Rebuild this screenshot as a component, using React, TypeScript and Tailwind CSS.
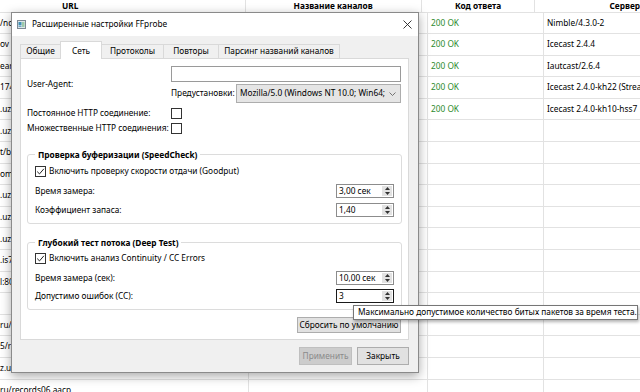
import React from 'react';

const urlTails = [
  '/nc', 'ov', 'ear', '174', '.uz', '.uz', 't/b', 'om', '.uz', '.uz', '.uz', '.is7', 'l:80', '',
  'ru/', '5/r', 'z.uz/1100-sep', 'ru/records06.aacp',
];

const servers = [
  'Nimble/4.3.0-2',
  'Icecast 2.4.4',
  'Iautcast/2.6.4',
  'Icecast 2.4.0-kh22 (Streaming Media)',
  'Icecast 2.4.0-kh10-hss7',
];

const CheckBox = ({ checked }: { checked?: boolean }) => (
  <span className="w-[11px] h-[11px] border border-[#333333] bg-white flex items-center justify-center shrink-0">
    {checked && (
      <svg width="9" height="9" viewBox="0 0 9 9">
        <path d="M1.2 4.6 L3.5 6.9 L7.9 1.8" fill="none" stroke="#222" strokeWidth="1" />
      </svg>
    )}
  </span>
);

const SpinBox = ({ value, focused }: { value: string; focused?: boolean }) => (
  <div
    className={
      focused
        ? 'w-[58px] h-[14px] border border-[#1a1a1a] bg-white flex'
        : 'w-[58px] h-[14px] border border-[#8c8c8c] bg-white flex'
    }
  >
    <span className="flex-1 pl-[2px] leading-[12px] whitespace-nowrap">{value}</span>
    <span className="w-[10px] my-[1px] mr-[1px] bg-[#e2e2e2] flex flex-col items-center justify-center gap-[2px]">
      <svg width="5" height="3" viewBox="0 0 5 3">
        <path d="M0 3 L2.5 0 L5 3Z" fill="#333" />
      </svg>
      <svg width="5" height="3" viewBox="0 0 5 3">
        <path d="M0 0 L5 0 L2.5 3Z" fill="#333" />
      </svg>
    </span>
  </div>
);

const FieldRow = ({ label, value, focused, className }: { label: string; value: string; focused?: boolean; className: string }) => (
  <div className={`flex items-center justify-between h-[14px] ${className}`}>
    <span>{label}</span>
    <SpinBox value={value} focused={focused} />
  </div>
);

export default function App() {
  return (
    <div className="relative w-[640px] h-[392px] overflow-hidden bg-white text-[8.3px] text-black font-['Noto_Sans','DejaVu_Sans',sans-serif]">
      {/* background table */}
      <div className="flex flex-col">
        <div className="flex h-[12.5px] border-b border-[#e2e2e2] font-bold leading-[11px]">
          <div className="w-[249px] border-r border-[#e2e2e2] pl-[62px]">URL</div>
          <div className="w-[179px] border-r border-[#e2e2e2] text-center">Название каналов</div>
          <div className="w-[116px] border-r border-[#e2e2e2] text-center">Код ответа</div>
          <div className="flex-1 pl-[74px] whitespace-nowrap">Сервер</div>
        </div>
        {urlTails.map((u, i) => (
          <div key={i} className="flex h-[21.6px] shrink-0 border-b border-[#e2e2e2] items-stretch">
            <div className="w-[249px] border-r border-[#e2e2e2] flex items-center whitespace-nowrap">{u}</div>
            <div className="w-[179px] border-r border-[#e2e2e2]" />
            <div className="w-[116px] border-r border-[#e2e2e2] flex items-center pl-[3px] text-[#2e8b2e]">
              {i < servers.length ? '200 OK' : ''}
            </div>
            <div className="flex-1 flex items-center pl-[3px] whitespace-nowrap overflow-hidden">
              {servers[i] ?? ''}
            </div>
          </div>
        ))}
      </div>

      {/* dialog window */}
      <div className="absolute left-[11px] top-[12px] w-[408px] h-[361px] border border-[#8a8a8a] bg-[#f0f0f0] shadow-[0_3px_10px_rgba(0,0,0,0.35)] flex flex-col">
        <div className="h-[23px] bg-white flex items-center pl-[5px] pr-[6px]">
          <svg width="9" height="9" viewBox="0 0 9 9" className="shrink-0">
            <rect x="0.5" y="0.5" width="8" height="8" fill="#dfe6ea" stroke="#7d8a94" />
            <rect x="1.5" y="2" width="3" height="3" fill="#3f8fb5" />
            <rect x="5" y="2" width="2.5" height="5" fill="#9cc9a8" />
            <rect x="1.5" y="5.5" width="3" height="1.5" fill="#6aa3c4" />
          </svg>
          <span className="ml-[6px]">Расширенные настройки FFprobe</span>
          <svg width="9" height="9" viewBox="0 0 9 9" className="ml-auto">
            <path d="M0.5 0.5 L8.5 8.5 M8.5 0.5 L0.5 8.5" stroke="#222" strokeWidth="0.9" />
          </svg>
        </div>

        <div className="flex-1 flex flex-col pt-[5px] pl-[8px] pr-[9px] pb-[7px]">
          {/* tabs */}
          <div className="flex items-end h-[17px] relative z-10">
            <div className="w-[41px] h-[14px] border border-b-0 border-[#d9d9d9] flex items-center justify-center">Общие</div>
            <div className="w-[42px] h-[18px] -ml-px -mb-px bg-white border border-b-0 border-[#d9d9d9] flex items-center justify-center pt-[1px]">Сеть</div>
            <div className="w-[63px] h-[14px] -ml-px border border-b-0 border-[#d9d9d9] flex items-center justify-center">Протоколы</div>
            <div className="w-[56px] h-[14px] -ml-px border border-b-0 border-[#d9d9d9] flex items-center justify-center">Повторы</div>
            <div className="w-[122px] h-[14px] -ml-px border border-b-0 border-[#d9d9d9] flex items-center justify-center">Парсинг названий каналов</div>
          </div>

          {/* tab page */}
          <div className="flex-1 bg-white border border-[#d9d9d9] pt-[7px] pl-[6px] pr-[6px] flex flex-col">
            <div className="grid grid-cols-[144px_1fr]">
              <div className="row-span-2 flex items-center">User-Agent:</div>
              <div className="h-[16px] border border-[#9a9a9a] bg-white mr-[1px]" />
              <div className="mt-[2px] h-[19px] flex items-center justify-between mr-[1px]">
                <span>Предустановки:</span>
                <div className="w-[165px] h-[19px] border border-[#adadad] bg-[#e5e5e5] flex items-center pl-[3px] pr-[4px]">
                  <span className="flex-1 whitespace-nowrap overflow-hidden">Mozilla/5.0 (Windows NT 10.0; Win64;</span>
                  <svg width="7" height="4" viewBox="0 0 7 4" className="ml-[3px] shrink-0">
                    <path d="M0.5 0.5 L3.5 3.5 L6.5 0.5" fill="none" stroke="#555" strokeWidth="0.8" />
                  </svg>
                </div>
              </div>
            </div>

            <div className="mt-[4px] h-[12px] flex items-center">
              <span className="w-[144px]">Постоянное HTTP соединение:</span>
              <CheckBox />
            </div>
            <div className="mt-[3px] h-[12px] flex items-center">
              <span className="w-[144px]">Множественные HTTP соединения:</span>
              <CheckBox />
            </div>

            <fieldset className="mt-[14.5px] border border-[#dcdcdc] rounded-[3px] px-[7px] pb-[6px]">
              <legend className="px-[3px] font-bold leading-[11px]">Проверка буферизации (SpeedCheck)</legend>
              <div className="mt-[6px] h-[12px] flex items-center gap-[3px]">
                <CheckBox checked />
                <span>Включить проверку скорости отдачи (Goodput)</span>
              </div>
              <FieldRow className="mt-[6.5px]" label="Время замера:" value="3,00 сек" />
              <FieldRow className="mt-[5px]" label="Коэффициент запаса:" value="1,40" />
            </fieldset>

            <fieldset className="mt-[12.5px] border border-[#dcdcdc] rounded-[3px] px-[7px] pb-[6px]">
              <legend className="px-[3px] font-bold leading-[11px]">Глубокий тест потока (Deep Test)</legend>
              <div className="mt-[5px] h-[12px] flex items-center gap-[3px]">
                <CheckBox checked />
                <span>Включить анализ Continuity / CC Errors</span>
              </div>
              <FieldRow className="mt-[6.5px]" label="Время замера (сек):" value="10,00 сек" />
              <FieldRow className="mt-[4px]" label="Допустимо ошибок (CC):" value="3" focused />
            </fieldset>

            <div className="mt-[7px] flex justify-end mr-[1px]">
              <div className="w-[104px] h-[16px] border border-[#adadad] bg-[#e1e1e1] flex items-center justify-center">
                Сбросить по умолчанию
              </div>
            </div>
          </div>

          {/* dialog buttons */}
          <div className="mt-[7px] h-[18px] flex justify-end gap-[5px]">
            <div className="w-[53px] h-[18px] border border-[#bfbfbf] bg-[#cccccc] text-[#8a8a8a] flex items-center justify-center">
              Применить
            </div>
            <div className="w-[52px] h-[18px] border border-[#adadad] bg-[#e1e1e1] flex items-center justify-center">
              Закрыть
            </div>
          </div>
        </div>
      </div>

      {/* tooltip */}
      <div className="absolute left-[353px] top-[305px] w-[285px] h-[15px] border border-[#767676] bg-white shadow-[1px_2px_3px_rgba(0,0,0,0.3)] flex items-center pl-[4px] whitespace-nowrap">
        Максимально допустимое количество битых пакетов за время теста.
      </div>
    </div>
  );
}
